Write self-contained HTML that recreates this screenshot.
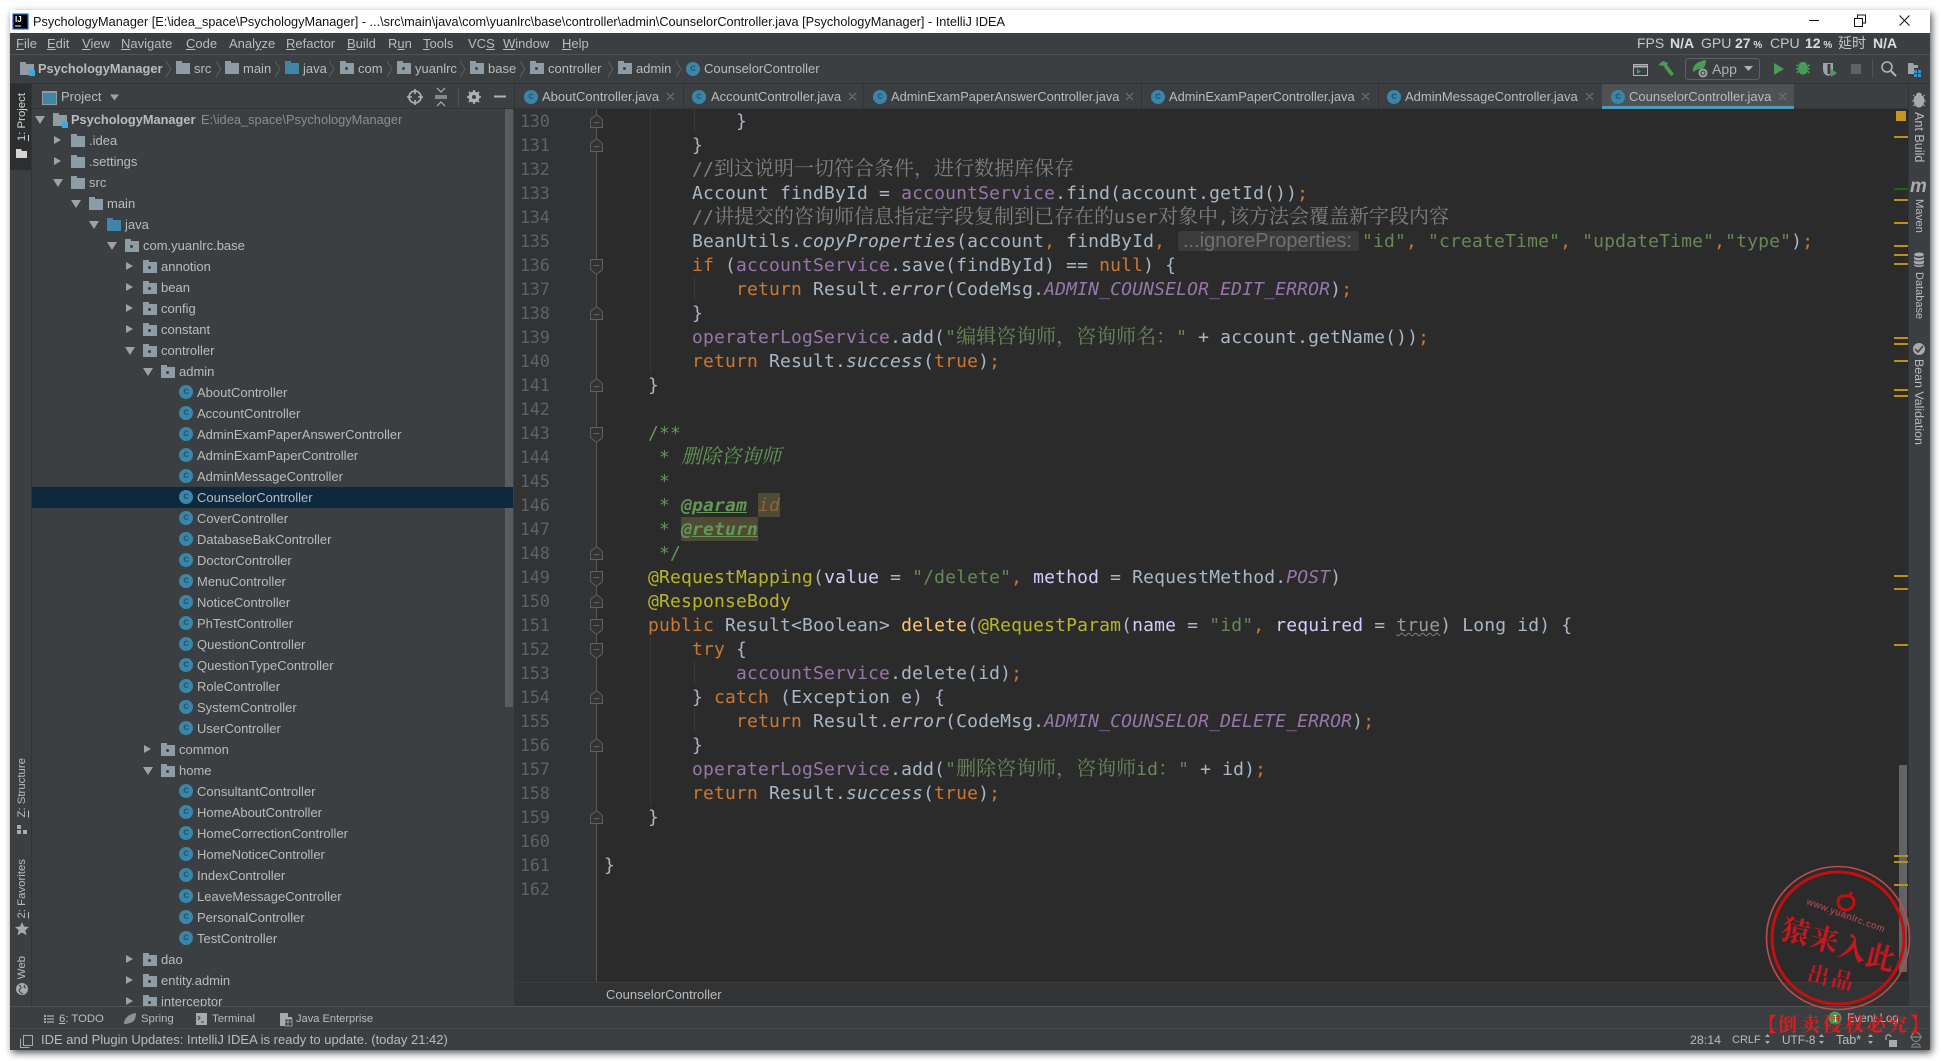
<!DOCTYPE html>
<html><head><meta charset="utf-8"><title>IntelliJ IDEA</title>
<style>
html,body{margin:0;padding:0;background:#fff}
body{position:relative;width:1941px;height:1061px;overflow:hidden;font-family:"Liberation Sans","Noto Sans CJK SC",sans-serif;font-size:13px;color:#bbb}
.a{position:absolute;white-space:pre}
#win{position:absolute;left:10px;top:10px;width:1920px;height:1040px;background:#3c3f41;box-shadow:2px 3px 7px rgba(0,0,0,.65)}
.bar{position:absolute}
.t{position:absolute;white-space:pre;line-height:20px}
.f,.fj{position:absolute;width:14px;height:11px;background:#8e9ca5}
.f:before,.fj:before{content:"";position:absolute;left:0;top:-2px;width:6px;height:2px;background:inherit}
.fj{background:#3f85a5}
.p:after{content:"";position:absolute;left:5px;top:4px;width:3px;height:3px;background:#3c3f41;border-radius:2px}
.ci{position:absolute;width:14px;height:14px;border-radius:50%;background:#3a86a8;color:#26566d;font:bold 10px/13px "Liberation Sans",sans-serif;text-align:center;font-style:normal}
#tree{position:absolute;left:0;top:108px;width:513px;height:898px;overflow:hidden;padding:0}
.r{position:absolute;left:0;width:513px;height:21px;line-height:21px;white-space:pre}
.r.s:before{content:"";position:absolute;left:31px;right:0;top:0;bottom:0;background:#0d293e}
.r span{position:absolute}
.ra,.da{position:absolute;width:0;height:0}
.ra{top:6px;border-left:7px solid #9fa1a3;border-top:4.5px solid transparent;border-bottom:4.5px solid transparent}
.da{top:7px;border-top:8px solid #9fa1a3;border-left:5px solid transparent;border-right:5px solid transparent}
.r .f,.r .fj{top:6px}
.r .ci{top:3px}
.vl,.vr{position:absolute;writing-mode:vertical-rl;white-space:pre;width:22px;line-height:22px;color:#bbb}
.vl{left:11px;transform:rotate(180deg);font-size:11.4px}
.vr{left:1908px;font-size:12.4px}
.code{position:absolute;left:0;top:1px;font-family:"DejaVu Sans Mono","Noto Serif CJK SC",monospace;font-size:18px;letter-spacing:.165px;color:#a9b7c6}
.l{position:absolute;left:604px;height:24px;line-height:24px;white-space:pre}
.n{position:absolute;left:520px;height:24px;line-height:26px;font-family:"DejaVu Sans Mono",monospace;font-size:16.5px;color:#606366}
.k{color:#cc7832}.st{color:#6a8759}.c{color:#808080}.d{color:#629755}.fd{color:#9876aa}.an{color:#bbb529}.m{color:#ffc66d}.i{font-style:italic}.pn{color:#d0d0ff}
.z{font-family:"Noto Serif CJK SC",serif;font-size:20px;letter-spacing:0;line-height:0}
.tag{font-weight:bold;text-decoration:underline}
</style></head>
<body>
<div id="win"></div>
<!-- title bar -->
<div class="bar" style="left:10px;top:10px;width:1920px;height:23px;background:#fff"></div>
<div class="t" style="left:33px;top:12px;color:#111;font-size:12.72px">PsychologyManager [E:\idea_space\PsychologyManager] - ...\src\main\java\com\yuanlrc\base\controller\admin\CounselorController.java [PsychologyManager] - IntelliJ IDEA</div>
<!-- bars -->
<div class="bar" style="left:10px;top:54px;width:1920px;height:1px;background:#505254"></div>
<div class="bar" style="left:10px;top:83px;width:1920px;height:1px;background:#323436"></div>
<!-- menu -->
<div class="t" style="left:16px;top:34px"><u>F</u>ile</div>
<div class="t" style="left:47px;top:34px"><u>E</u>dit</div>
<div class="t" style="left:82px;top:34px"><u>V</u>iew</div>
<div class="t" style="left:121px;top:34px"><u>N</u>avigate</div>
<div class="t" style="left:186px;top:34px"><u>C</u>ode</div>
<div class="t" style="left:229px;top:34px">Anal<u>y</u>ze</div>
<div class="t" style="left:286px;top:34px"><u>R</u>efactor</div>
<div class="t" style="left:347px;top:34px"><u>B</u>uild</div>
<div class="t" style="left:388px;top:34px">R<u>u</u>n</div>
<div class="t" style="left:423px;top:34px"><u>T</u>ools</div>
<div class="t" style="left:468px;top:34px">VC<u>S</u></div>
<div class="t" style="left:503px;top:34px"><u>W</u>indow</div>
<div class="t" style="left:562px;top:34px"><u>H</u>elp</div>
<!-- fps -->
<div class="t" style="left:1637px;top:33px;font-size:14px;color:#c4c6c8">FPS</div>
<div class="t" style="left:1670px;top:33px;font-size:14px;font-weight:bold;color:#dcdcdc">N/A</div>
<div class="t" style="left:1701px;top:33px;font-size:14px;color:#c4c6c8">GPU</div>
<div class="t" style="left:1735px;top:33px;font-size:14px;font-weight:bold;color:#dcdcdc">27<span style="font-size:10px"> %</span></div>
<div class="t" style="left:1770px;top:33px;font-size:14px;color:#c4c6c8">CPU</div>
<div class="t" style="left:1805px;top:33px;font-size:14px;font-weight:bold;color:#dcdcdc">12<span style="font-size:10px"> %</span></div>
<div class="t" style="left:1838px;top:33px;font-size:14px;color:#c4c6c8">延时</div>
<div class="t" style="left:1873px;top:33px;font-size:14px;font-weight:bold;color:#dcdcdc">N/A</div>
<!-- nav bar -->
<div class="t" style="left:38px;top:59px;font-weight:bold;font-size:12.8px">PsychologyManager</div>
<div class="f" style="left:20px;top:64px"></div><div class="bar" style="left:29px;top:70px;width:6px;height:6px;background:#3ba9e0"></div>
<div class="f" style="left:176px;top:63px"></div><div class="t" style="left:194px;top:59px">src</div>
<div class="f" style="left:225px;top:63px"></div><div class="t" style="left:243px;top:59px">main</div>
<div class="fj" style="left:285px;top:63px"></div><div class="t" style="left:303px;top:59px">java</div>
<div class="f p" style="left:340px;top:63px"></div><div class="t" style="left:358px;top:59px">com</div>
<div class="f p" style="left:397px;top:63px"></div><div class="t" style="left:415px;top:59px">yuanlrc</div>
<div class="f p" style="left:470px;top:63px"></div><div class="t" style="left:488px;top:59px">base</div>
<div class="f p" style="left:530px;top:63px"></div><div class="t" style="left:548px;top:59px">controller</div>
<div class="f p" style="left:618px;top:63px"></div><div class="t" style="left:636px;top:59px">admin</div>
<i class="ci" style="left:686px;top:62px">c</i><div class="t" style="left:704px;top:59px">CounselorController</div>

<!-- project header -->
<div class="bar" style="left:42px;top:91px;width:13px;height:11px;background:#3f85a5;border:1px solid #8e9ca5;border-top-width:2px"></div>
<div class="t" style="left:61px;top:87px">Project</div>
<div class="bar" style="left:31px;top:108px;width:484px;height:1px;background:#323436"></div>
<div class="bar" style="left:505px;top:109px;width:8px;height:598px;background:#595b5d"></div>

<!-- tree -->
<div id="tree">
<div class="r" style="top:1px"><b class="da" style="left:35px"></b><div class="f" style="left:53px"></div><div class="bar" style="left:62px;top:13px;width:6px;height:6px;background:#3ba9e0"></div><span style="left:71px;font-weight:bold;font-size:12.8px">PsychologyManager</span><span style="left:201px;color:#8b8d8f;font-size:12.85px">E:\idea_space\PsychologyManager</span></div>
<div class="r" style="top:22px"><b class="ra" style="left:54px"></b><div class="f" style="left:71px"></div><span style="left:89px">.idea</span></div>
<div class="r" style="top:43px"><b class="ra" style="left:54px"></b><div class="f" style="left:71px"></div><span style="left:89px">.settings</span></div>
<div class="r" style="top:64px"><b class="da" style="left:53px"></b><div class="f" style="left:71px"></div><span style="left:89px">src</span></div>
<div class="r" style="top:85px"><b class="da" style="left:71px"></b><div class="f" style="left:89px"></div><span style="left:107px">main</span></div>
<div class="r" style="top:106px"><b class="da" style="left:89px"></b><div class="fj" style="left:107px"></div><span style="left:125px">java</span></div>
<div class="r" style="top:127px"><b class="da" style="left:107px"></b><div class="f p" style="left:125px"></div><span style="left:143px">com.yuanlrc.base</span></div>
<div class="r" style="top:148px"><b class="ra" style="left:126px"></b><div class="f p" style="left:143px"></div><span style="left:161px">annotion</span></div>
<div class="r" style="top:169px"><b class="ra" style="left:126px"></b><div class="f p" style="left:143px"></div><span style="left:161px">bean</span></div>
<div class="r" style="top:190px"><b class="ra" style="left:126px"></b><div class="f p" style="left:143px"></div><span style="left:161px">config</span></div>
<div class="r" style="top:211px"><b class="ra" style="left:126px"></b><div class="f p" style="left:143px"></div><span style="left:161px">constant</span></div>
<div class="r" style="top:232px"><b class="da" style="left:125px"></b><div class="f p" style="left:143px"></div><span style="left:161px">controller</span></div>
<div class="r" style="top:253px"><b class="da" style="left:143px"></b><div class="f p" style="left:161px"></div><span style="left:179px">admin</span></div>
<div class="r" style="top:274px"><i class="ci" style="left:179px">c</i><span style="left:197px">AboutController</span></div>
<div class="r" style="top:295px"><i class="ci" style="left:179px">c</i><span style="left:197px">AccountController</span></div>
<div class="r" style="top:316px"><i class="ci" style="left:179px">c</i><span style="left:197px">AdminExamPaperAnswerController</span></div>
<div class="r" style="top:337px"><i class="ci" style="left:179px">c</i><span style="left:197px">AdminExamPaperController</span></div>
<div class="r" style="top:358px"><i class="ci" style="left:179px">c</i><span style="left:197px">AdminMessageController</span></div>
<div class="r s" style="top:379px"><i class="ci" style="left:179px">c</i><span style="left:197px">CounselorController</span></div>
<div class="r" style="top:400px"><i class="ci" style="left:179px">c</i><span style="left:197px">CoverController</span></div>
<div class="r" style="top:421px"><i class="ci" style="left:179px">c</i><span style="left:197px">DatabaseBakController</span></div>
<div class="r" style="top:442px"><i class="ci" style="left:179px">c</i><span style="left:197px">DoctorController</span></div>
<div class="r" style="top:463px"><i class="ci" style="left:179px">c</i><span style="left:197px">MenuController</span></div>
<div class="r" style="top:484px"><i class="ci" style="left:179px">c</i><span style="left:197px">NoticeController</span></div>
<div class="r" style="top:505px"><i class="ci" style="left:179px">c</i><span style="left:197px">PhTestController</span></div>
<div class="r" style="top:526px"><i class="ci" style="left:179px">c</i><span style="left:197px">QuestionController</span></div>
<div class="r" style="top:547px"><i class="ci" style="left:179px">c</i><span style="left:197px">QuestionTypeController</span></div>
<div class="r" style="top:568px"><i class="ci" style="left:179px">c</i><span style="left:197px">RoleController</span></div>
<div class="r" style="top:589px"><i class="ci" style="left:179px">c</i><span style="left:197px">SystemController</span></div>
<div class="r" style="top:610px"><i class="ci" style="left:179px">c</i><span style="left:197px">UserController</span></div>
<div class="r" style="top:631px"><b class="ra" style="left:144px"></b><div class="f p" style="left:161px"></div><span style="left:179px">common</span></div>
<div class="r" style="top:652px"><b class="da" style="left:143px"></b><div class="f p" style="left:161px"></div><span style="left:179px">home</span></div>
<div class="r" style="top:673px"><i class="ci" style="left:179px">c</i><span style="left:197px">ConsultantController</span></div>
<div class="r" style="top:694px"><i class="ci" style="left:179px">c</i><span style="left:197px">HomeAboutController</span></div>
<div class="r" style="top:715px"><i class="ci" style="left:179px">c</i><span style="left:197px">HomeCorrectionController</span></div>
<div class="r" style="top:736px"><i class="ci" style="left:179px">c</i><span style="left:197px">HomeNoticeController</span></div>
<div class="r" style="top:757px"><i class="ci" style="left:179px">c</i><span style="left:197px">IndexController</span></div>
<div class="r" style="top:778px"><i class="ci" style="left:179px">c</i><span style="left:197px">LeaveMessageController</span></div>
<div class="r" style="top:799px"><i class="ci" style="left:179px">c</i><span style="left:197px">PersonalController</span></div>
<div class="r" style="top:820px"><i class="ci" style="left:179px">c</i><span style="left:197px">TestController</span></div>
<div class="r" style="top:841px"><b class="ra" style="left:126px"></b><div class="f p" style="left:143px"></div><span style="left:161px">dao</span></div>
<div class="r" style="top:862px"><b class="ra" style="left:126px"></b><div class="f p" style="left:143px"></div><span style="left:161px">entity.admin</span></div>
<div class="r" style="top:883px"><b class="ra" style="left:126px"></b><div class="f p" style="left:143px"></div><span style="left:161px">interceptor</span></div>
</div>

<!-- left stripe -->
<div class="bar" style="left:10px;top:84px;width:21px;height:922px;background:#3c3f41;border-right:1px solid #323436"></div>
<div class="bar" style="left:10px;top:84px;width:21px;height:86px;background:#2c2e2f"></div>
<div class="vl" style="top:93px;color:#d4d4d4"><u>1</u>: Project</div>
<div class="vl" style="top:758px"><u>Z</u>: Structure</div>
<div class="vl" style="top:859px"><u>2</u>: Favorites</div>
<div class="vl" style="top:956px">Web</div>

<!-- tabs -->
<div class="bar" style="left:515px;top:84px;width:1393px;height:24px;background:#3c3f41"></div>
<div class="bar" style="left:1602px;top:84px;width:192px;height:24px;background:#4e5254"></div>
<div class="bar" style="left:515px;top:108px;width:1393px;height:1px;background:#323436"></div>
<div class="bar" style="left:1602px;top:106px;width:192px;height:3px;background:#4a9ab8"></div>
<i class="ci" style="left:524px;top:90px">c</i><div class="t" style="left:542px;top:87px">AboutController.java</div>
<i class="ci" style="left:692px;top:90px">c</i><div class="t" style="left:711px;top:87px">AccountController.java</div>
<i class="ci" style="left:873px;top:90px">c</i><div class="t" style="left:891px;top:87px;font-size:12.85px">AdminExamPaperAnswerController.java</div>
<i class="ci" style="left:1151px;top:90px">c</i><div class="t" style="left:1169px;top:87px;font-size:12.85px">AdminExamPaperController.java</div>
<i class="ci" style="left:1387px;top:90px">c</i><div class="t" style="left:1405px;top:87px">AdminMessageController.java</div>
<i class="ci" style="left:1611px;top:90px">c</i><div class="t" style="left:1629px;top:87px">CounselorController.java</div>

<!-- editor backgrounds -->
<div class="bar" style="left:515px;top:109px;width:81px;height:873px;background:#313335"></div>
<div class="bar" style="left:596px;top:109px;width:1312px;height:873px;background:#2b2b2b"></div>
<div class="bar" style="left:515px;top:982px;width:1393px;height:24px;background:#313335;border-top:0"></div>
<div class="bar" style="left:515px;top:982px;width:1393px;height:1px;background:#3a3c3e"></div>
<div class="t" style="left:606px;top:985px">CounselorController</div>
<!-- highlights -->
<div class="bar" style="left:758px;top:493px;width:22px;height:24px;background:#4f4a33"></div>
<div class="bar" style="left:681px;top:517px;width:77px;height:24px;background:#4f4a33"></div>
<div class="bar" style="left:1178px;top:231px;width:181px;height:20px;background:#3b3b3b;border-radius:3px"></div>
<div class="a" style="left:1183px;top:229px;line-height:24px;font-size:20px;color:#707070">...ignoreProperties:</div>

<!-- line numbers -->
<div class="n" style="top:109px">130</div><div class="n" style="top:133px">131</div><div class="n" style="top:157px">132</div><div class="n" style="top:181px">133</div><div class="n" style="top:205px">134</div><div class="n" style="top:229px">135</div><div class="n" style="top:253px">136</div><div class="n" style="top:277px">137</div><div class="n" style="top:301px">138</div><div class="n" style="top:325px">139</div><div class="n" style="top:349px">140</div><div class="n" style="top:373px">141</div><div class="n" style="top:397px">142</div><div class="n" style="top:421px">143</div><div class="n" style="top:445px">144</div><div class="n" style="top:469px">145</div><div class="n" style="top:493px">146</div><div class="n" style="top:517px">147</div><div class="n" style="top:541px">148</div><div class="n" style="top:565px">149</div><div class="n" style="top:589px">150</div><div class="n" style="top:613px">151</div><div class="n" style="top:637px">152</div><div class="n" style="top:661px">153</div><div class="n" style="top:685px">154</div><div class="n" style="top:709px">155</div><div class="n" style="top:733px">156</div><div class="n" style="top:757px">157</div><div class="n" style="top:781px">158</div><div class="n" style="top:805px">159</div><div class="n" style="top:829px">160</div><div class="n" style="top:853px">161</div><div class="n" style="top:877px">162</div>

<!-- code -->
<div class="code">
<div class="l" style="top:109px">            }</div>
<div class="l" style="top:133px">        }</div>
<div class="l c" style="top:157px">        //<span class="z">到这说明一切符合条件，进行数据库保存</span></div>
<div class="l" style="top:181px">        Account findById = <span class="fd">accountService</span>.find(account.getId())<span class="k">;</span></div>
<div class="l c" style="top:205px">        //<span class="z">讲提交的咨询师信息指定字段复制到已存在的</span>user<span class="z">对象中</span>,<span class="z">该方法会覆盖新字段内容</span></div>
<div class="l" style="top:229px">        BeanUtils.<span class="i">copyProperties</span>(account<span class="k">,</span> findById<span class="k">,</span></div>
<div class="l" style="top:229px;left:1362px"><span class="st">"id"</span><span class="k">,</span> <span class="st">"createTime"</span><span class="k">,</span> <span class="st">"updateTime"</span><span class="k">,</span><span class="st">"type"</span>)<span class="k">;</span></div>
<div class="l" style="top:253px">        <span class="k">if</span> (<span class="fd">accountService</span>.save(findById) == <span class="k">null</span>) {</div>
<div class="l" style="top:277px">            <span class="k">return</span> Result.<span class="i">error</span>(CodeMsg.<span class="fd i">ADMIN_COUNSELOR_EDIT_ERROR</span>)<span class="k">;</span></div>
<div class="l" style="top:301px">        }</div>
<div class="l" style="top:325px">        <span class="fd">operaterLogService</span>.add(<span class="st">"<span class="z">编辑咨询师，咨询师名：</span>"</span> + account.getName())<span class="k">;</span></div>
<div class="l" style="top:349px">        <span class="k">return</span> Result.<span class="i">success</span>(<span class="k">true</span>)<span class="k">;</span></div>
<div class="l" style="top:373px">    }</div>
<div class="l d" style="top:421px">    /**</div>
<div class="l d" style="top:445px">     * <span class="z i">删除咨询师</span></div>
<div class="l d" style="top:469px">     *</div>
<div class="l d" style="top:493px">     * <span class="tag i">@param</span> <span class="i" style="color:#8a653b">id</span></div>
<div class="l d" style="top:517px">     * <span class="tag i">@return</span></div>
<div class="l d" style="top:541px">     */</div>
<div class="l" style="top:565px">    <span class="an">@RequestMapping</span>(<span class="pn">value</span> = <span class="st">"/delete"</span><span class="k">,</span> <span class="pn">method</span> = RequestMethod.<span class="fd i">POST</span>)</div>
<div class="l an" style="top:589px">    @ResponseBody</div>
<div class="l" style="top:613px">    <span class="k">public</span> Result&lt;Boolean&gt; <span class="m">delete</span>(<span class="an">@RequestParam</span>(<span class="pn">name</span> = <span class="st">"id"</span><span class="k">,</span> <span class="pn">required</span> = <span style="color:#9a9a9a;text-decoration:underline wavy #7f7f7f 1px">true</span>) Long id) {</div>
<div class="l" style="top:637px">        <span class="k">try</span> {</div>
<div class="l" style="top:661px">            <span class="fd">accountService</span>.delete(id)<span class="k">;</span></div>
<div class="l" style="top:685px">        } <span class="k">catch</span> (Exception e) {</div>
<div class="l" style="top:709px">            <span class="k">return</span> Result.<span class="i">error</span>(CodeMsg.<span class="fd i">ADMIN_COUNSELOR_DELETE_ERROR</span>)<span class="k">;</span></div>
<div class="l" style="top:733px">        }</div>
<div class="l" style="top:757px">        <span class="fd">operaterLogService</span>.add(<span class="st">"<span class="z">删除咨询师，咨询师</span>id<span class="z">：</span>"</span> + id)<span class="k">;</span></div>
<div class="l" style="top:781px">        <span class="k">return</span> Result.<span class="i">success</span>(<span class="k">true</span>)<span class="k">;</span></div>
<div class="l" style="top:805px">    }</div>
<div class="l" style="top:853px">}</div>
</div>

<!-- right stripe -->
<div class="bar" style="left:1908px;top:84px;width:22px;height:922px;background:#3c3f41;border-left:1px solid #323436;box-sizing:border-box"></div>
<div class="vr" style="top:112px;font-size:12.6px">Ant Build</div>
<div class="a" style="left:1910px;top:175px;font:italic bold 19px/24px 'Liberation Sans',sans-serif;color:#a9abad">m</div>
<div class="vr" style="top:199px;font-size:11.3px">Maven</div>
<div class="vr" style="top:272px;font-size:11px">Database</div>
<div class="vr" style="top:359px">Bean Validation</div>

<!-- bottom -->
<div class="bar" style="left:10px;top:1006px;width:1920px;height:1px;background:#505254"></div>
<div class="bar" style="left:10px;top:1028px;width:1920px;height:1px;background:#474a4c"></div>
<div class="t" style="left:59px;top:1009px;font-size:11.3px"><u>6</u>: TODO</div>
<div class="t" style="left:141px;top:1009px;font-size:11.3px">Spring</div>
<div class="t" style="left:212px;top:1009px;font-size:11.4px">Terminal</div>
<div class="t" style="left:296px;top:1009px;font-size:11.1px">Java Enterprise</div>
<div class="t" style="left:1847px;top:1009px;font-size:11.5px">Event Log</div>
<div class="t" style="left:41px;top:1030px">IDE and Plugin Updates: IntelliJ IDEA is ready to update. (today 21:42)</div>
<div class="t" style="left:1690px;top:1030px;font-size:12.4px">28:14</div>
<div class="t" style="left:1732px;top:1030px;font-size:11px">CRLF</div>
<div class="t" style="left:1782px;top:1030px;font-size:11.8px">UTF-8</div>
<div class="t" style="left:1836px;top:1030px;font-size:12.6px">Tab*</div>

<!-- icons overlay -->
<svg width="1941" height="1061" viewBox="0 0 1941 1061" style="position:absolute;left:0;top:0" xmlns="http://www.w3.org/2000/svg">
<!-- IJ icon -->
<rect x="13" y="14" width="15" height="15" fill="#000" stroke="#1b6fd8" stroke-width="1.2"/>
<text x="15" y="22" font-family="Liberation Sans" font-size="8" font-weight="bold" fill="#fff">IJ</text>
<path d="M15 26h6" stroke="#fff" stroke-width="1"/>
<!-- window buttons -->
<path d="M1809 20.5h10" stroke="#111" stroke-width="1"/>
<path d="M1854.5 18.5h8v8h-8zM1857.5 18v-3h8v8h-3" fill="none" stroke="#111"/>
<path d="M1899.5 15.5l10 10M1909.5 15.5l-10 10" stroke="#111" stroke-width="1"/>
<!-- nav chevrons -->
<path d="M166 61l5 8-5 8M216 61l5 8-5 8M275 61l5 8-5 8M329 61l5 8-5 8M387 61l5 8-5 8M460 61l5 8-5 8M520 61l5 8-5 8M608 61l5 8-5 8M676 61l5 8-5 8" fill="none" stroke="#5b5e60"/>
<!-- project header -->
<path d="M110 94.5h9l-4.5 6z" fill="#9fa1a3"/>
<circle cx="415" cy="97" r="6" fill="none" stroke="#afb1b3" stroke-width="1.6"/>
<path d="M415 89v5M415 100v5M407 97h5M418 97h5" stroke="#afb1b3" stroke-width="1.6"/>
<path d="M435 96h12M435 98h12M437 88l4 4 4-4M437 106l4-4 4 4" fill="none" stroke="#afb1b3" stroke-width="1.2"/>
<path d="M458.5 88v18" stroke="#505254"/>
<circle cx="474" cy="97" r="4" fill="none" stroke="#afb1b3" stroke-width="3"/>
<path d="M474 90v14M467 97h14M469 92l10 10M479 92l-10 10" stroke="#afb1b3" stroke-width="1.8"/>
<circle cx="474" cy="97" r="2" fill="#3c3f41"/>
<path d="M494 96.5h12" stroke="#afb1b3" stroke-width="2"/>
<!-- tab close -->
<g fill="none" stroke="#6f7173" stroke-width="1.2">
<path d="M667 93l7 7M674 93l-7 7M849 93l7 7M856 93l-7 7M1126 93l7 7M1133 93l-7 7M1362 93l7 7M1369 93l-7 7M1586 93l7 7M1593 93l-7 7M1779 93l7 7M1786 93l-7 7"/>
</g>
<g fill="#323436"><rect x="683" y="84" width="1" height="24"/><rect x="863" y="84" width="1" height="24"/><rect x="1141" y="84" width="1" height="24"/><rect x="1378" y="84" width="1" height="24"/><rect x="514" y="84" width="1" height="922"/></g>
<!-- toolbar -->
<rect x="1633.5" y="64.5" width="14" height="11" fill="none" stroke="#afb1b3"/><path d="M1634 66.5h13" stroke="#afb1b3" stroke-width="2"/><path d="M1637 69v5l4-2.5z" fill="#499c54"/>
<path d="M1658 65l5-4 5 2-2 4-2-1zM1664 67l3-2 7 9-3 2z" fill="#499c54"/>
<rect x="1685.5" y="58.5" width="74" height="21" rx="3" fill="none" stroke="#5e6162"/>
<path d="M1693 72c-1-7 5-11 13-12 0 6-2 8-5 9-4 0-6 2-8 3z" fill="#499c54"/>
<circle cx="1703" cy="73" r="4.5" fill="#9da3a6"/><circle cx="1703" cy="73" r="2" fill="none" stroke="#3c3f41"/>
<text x="1712" y="74" font-family="Liberation Sans" font-size="14" fill="#afb1b3">App</text>
<path d="M1744 66h9l-4.5 5z" fill="#afb1b3"/>
<path d="M1774 63l10 6-10 6z" fill="#499c54"/>
<path d="M1803 62c-2 0-4 1-4 3v1l-2-2-1 1 3 3h-3v1.500h3l-3 3 1 1 2-2c0 2 2 3 4 3s4-1 4-3l2 2 1-1-3-3h3V68h-3l3-3-1-1-2 2v-1c0-2-2-3-4-3z" fill="#499c54"/>
<path d="M1823 63h10v6c0 4-2 6-5 7-3-1-5-3-5-7z" fill="#9da3a6"/><path d="M1829 64v10" stroke="#3c3f41" stroke-width="3"/>
<path d="M1831 69l6 4-6 4z" fill="#499c54"/>
<rect x="1851" y="64" width="10" height="10" fill="#5f6163"/>
<path d="M1872.5 60v18" stroke="#505254"/>
<circle cx="1887" cy="67" r="5" fill="none" stroke="#afb1b3" stroke-width="1.6"/><path d="M1891 71l5 5" stroke="#afb1b3" stroke-width="2"/>
<path d="M1908 63h5l1 2h4v3h-4v6h-6z" fill="#9da3a6"/>
<path d="M1914 70h3v3h-3zM1918 70h3v3h-3zM1914 74h3v3h-3zM1918 74h3v3h-3z" fill="#3c8fc4"/>
<!-- left stripe icons -->
<path d="M16 149h5l1 2h5v7H16z" fill="#d4d4d4"/>
<path d="M17 825h4v4h-4zM17 830h4v4h-4zM23 830h4v4h-4z" fill="#a8aaac"/>
<path d="M22 922l2 4.500 5 .5-3.700 3.200 1.200 5-4.500-2.700-4.500 2.700 1.200-5L15 927l5-.5z" fill="#a8aaac"/>
<circle cx="22" cy="989" r="6" fill="#a8aaac"/><path d="M19 985c2 1 3 3 1 4s0 4 3 5M25 985c-1 1-2 2 1 3" fill="none" stroke="#3c3f41"/>
<!-- right stripe icons -->
<path d="M1919 93c2 0 3 2 2 3 2 1 3 2 3 4 0 3-2 7-5 7s-5-4-5-7c0-2 1-3 3-4-1-1 0-3 2-3zM1913 95l3 2M1925 95l-3 2M1912 101h3M1926 101h-3M1913 106l3-2M1925 106l-3-2" fill="#a8aaac" stroke="#a8aaac"/>
<ellipse cx="1919" cy="254.500" rx="5" ry="2" fill="#a8aaac"/><path d="M1914 256v9c0 1 2 2 5 2s5-1 5-2v-9c0 1-2 2-5 2s-5-1-5-2z" fill="#a8aaac"/><path d="M1914 259c0 1 2 2 5 2s5-1 5-2M1914 263c0 1 2 2 5 2s5-1 5-2" fill="none" stroke="#3c3f41"/>
<circle cx="1919" cy="349" r="6" fill="#a8aaac"/><path d="M1915 349l3 3 5-6" fill="none" stroke="#3c3f41" stroke-width="1.500"/>
<!-- gutter -->
<path d="M596.500 109v873" stroke="#555759"/>
<g fill="none" stroke="#383838">
<path d="M650.500 109v264M694.500 109v24M694.500 277v24M650.500 637v168M694.500 661v24M694.500 709v24"/>
</g>
<g fill="#313335" stroke="#5d5f61">
<path d="M590.500 127.500v-8l6-5 6 5v8z"/><path d="M590.500 151.500v-8l6-5 6 5v8z"/><path d="M590.500 319.500v-8l6-5 6 5v8z"/><path d="M590.500 391.500v-8l6-5 6 5v8z"/><path d="M590.500 559.500v-8l6-5 6 5v8z"/><path d="M590.500 607.500v-8l6-5 6 5v8z"/><path d="M590.500 703.500v-8l6-5 6 5v8z"/><path d="M590.500 751.500v-8l6-5 6 5v8z"/><path d="M590.500 823.500v-8l6-5 6 5v8z"/>
<path d="M590.500 259.500h12v10l-6 5-6-5z"/><path d="M590.500 427.500h12v10l-6 5-6-5z"/><path d="M590.500 571.500h12v10l-6 5-6-5z"/><path d="M590.500 619.500h12v10l-6 5-6-5z"/><path d="M590.500 643.500h12v10l-6 5-6-5z"/>
<path d="M593.500 122.500h6M593.500 146.500h6M593.500 314.500h6M593.500 386.500h6M593.500 554.500h6M593.500 602.500h6M593.500 698.500h6M593.500 746.500h6M593.500 818.500h6M593.500 265.500h6M593.500 433.500h6M593.500 577.500h6M593.500 625.500h6M593.500 649.500h6"/>
</g>
<!-- scrollbar + stripes -->
<rect x="1899" y="765" width="8" height="207" fill="#626364"/>
<rect x="1896" y="111" width="10" height="10" fill="#c6961d"/>
<g fill="#b8901f"><rect x="1894" y="136" width="14" height="2"/><rect x="1894" y="199" width="14" height="2"/><rect x="1894" y="222" width="14" height="2"/><rect x="1894" y="245" width="14" height="2"/><rect x="1894" y="254" width="14" height="2"/><rect x="1894" y="263" width="14" height="2"/><rect x="1894" y="337" width="14" height="2"/><rect x="1894" y="343" width="14" height="2"/><rect x="1894" y="360" width="14" height="2"/><rect x="1894" y="389" width="14" height="2"/><rect x="1894" y="395" width="14" height="2"/><rect x="1894" y="575" width="14" height="2"/><rect x="1894" y="588" width="14" height="2"/><rect x="1894" y="644" width="14" height="2"/><rect x="1894" y="855" width="14" height="2"/><rect x="1894" y="861" width="14" height="2"/><rect x="1894" y="884" width="14" height="2"/></g>
<rect x="1894" y="188" width="14" height="2" fill="#0d6b0d"/>
<!-- bottom icons -->
<path d="M44 1015h2v2h-2zM44 1018h2v2h-2zM44 1021h2v2h-2z" fill="#a8aaac"/><path d="M47 1016h7M47 1019h7M47 1022h7" stroke="#a8aaac" stroke-width="1.200"/>
<path d="M124 1024c0-6 5-10 12-11 0 6-2 9-6 10-3 1-4 1-6 1z" fill="#8e9092"/>
<rect x="196" y="1013" width="11" height="12" fill="#a8aaac"/><path d="M198 1016l2 2-2 2M201 1022h3" fill="none" stroke="#3c3f41"/>
<path d="M280 1013h8v4h4v9h-12z" fill="#a8aaac"/><path d="M285 1019h7v7h-7zM285 1022h7M288 1019v7" fill="#3c3f41" stroke="#a8aaac" stroke-width=".8"/>
<path d="M23.500 1035.500h9v10h-9zM20.500 1038.500v9h9" fill="none" stroke="#a8aaac"/>
<path d="M1765 1037l2.500-3 2.500 3zM1765 1041l2.500 3 2.500-3zM1819 1037l2.500-3 2.500 3zM1819 1041l2.500 3 2.500-3zM1868 1037l2.500-3 2.500 3zM1868 1041l2.500 3 2.500-3z" fill="#a8aaac"/>
<rect x="1889" y="1040" width="8" height="7" fill="#a8aaac"/><path d="M1886 1040v-3c0-3 5-3 5 0" fill="none" stroke="#a8aaac" stroke-width="1.200"/>
<circle cx="1916" cy="1037" r="4.500" fill="none" stroke="#8e9092"/><path d="M1910 1037h12M1912 1046c0-3 8-3 8 0M1911 1047h10" fill="none" stroke="#8e9092"/>
<circle cx="1835" cy="1018" r="6.500" fill="#499c54"/>
<text x="1832.500" y="1022" font-family="Liberation Sans" font-size="10" fill="#fff">1</text>
<!-- stamp -->
<g fill="none" stroke="#c40f0f">
<circle cx="1838" cy="938" r="71.500" stroke="#c24a4a" stroke-width="1.600"/>
<circle cx="1838" cy="938" r="66" stroke-width="3"/>
<path d="M1845 896c-5-1-7 3-7 6 0 5 4 8 8 8s8-3 8-8c0-4-3-7-9-6zM1849 896l3-4" stroke-width="3"/>
</g>
<text transform="translate(1806,904) rotate(20)" font-family="Liberation Sans" font-size="9.500" letter-spacing=".6" fill="#c85050">www.yuanlrc.com</text>
<g font-family="'Noto Serif CJK SC',serif" font-weight="700" fill="#c2181f">
<text transform="translate(1779,938) rotate(14)" font-size="29">猿</text>
<text transform="translate(1808,946) rotate(14)" font-size="29">来</text>
<text transform="translate(1836,955) rotate(14)" font-size="29">入</text>
<text transform="translate(1864,964) rotate(14)" font-size="29">此</text>
<text transform="translate(1806,980) rotate(14)" font-size="22">出</text>
<text transform="translate(1830,985) rotate(14)" font-size="22">品</text>
</g>
<text y="1031" x="1758 1778 1801 1823 1845 1867 1888 1910" font-family="'Noto Serif CJK SC',serif" font-weight="700" font-size="19" fill="#e01b1b">【倒卖侵权必究】</text>
</svg>
</body></html>
